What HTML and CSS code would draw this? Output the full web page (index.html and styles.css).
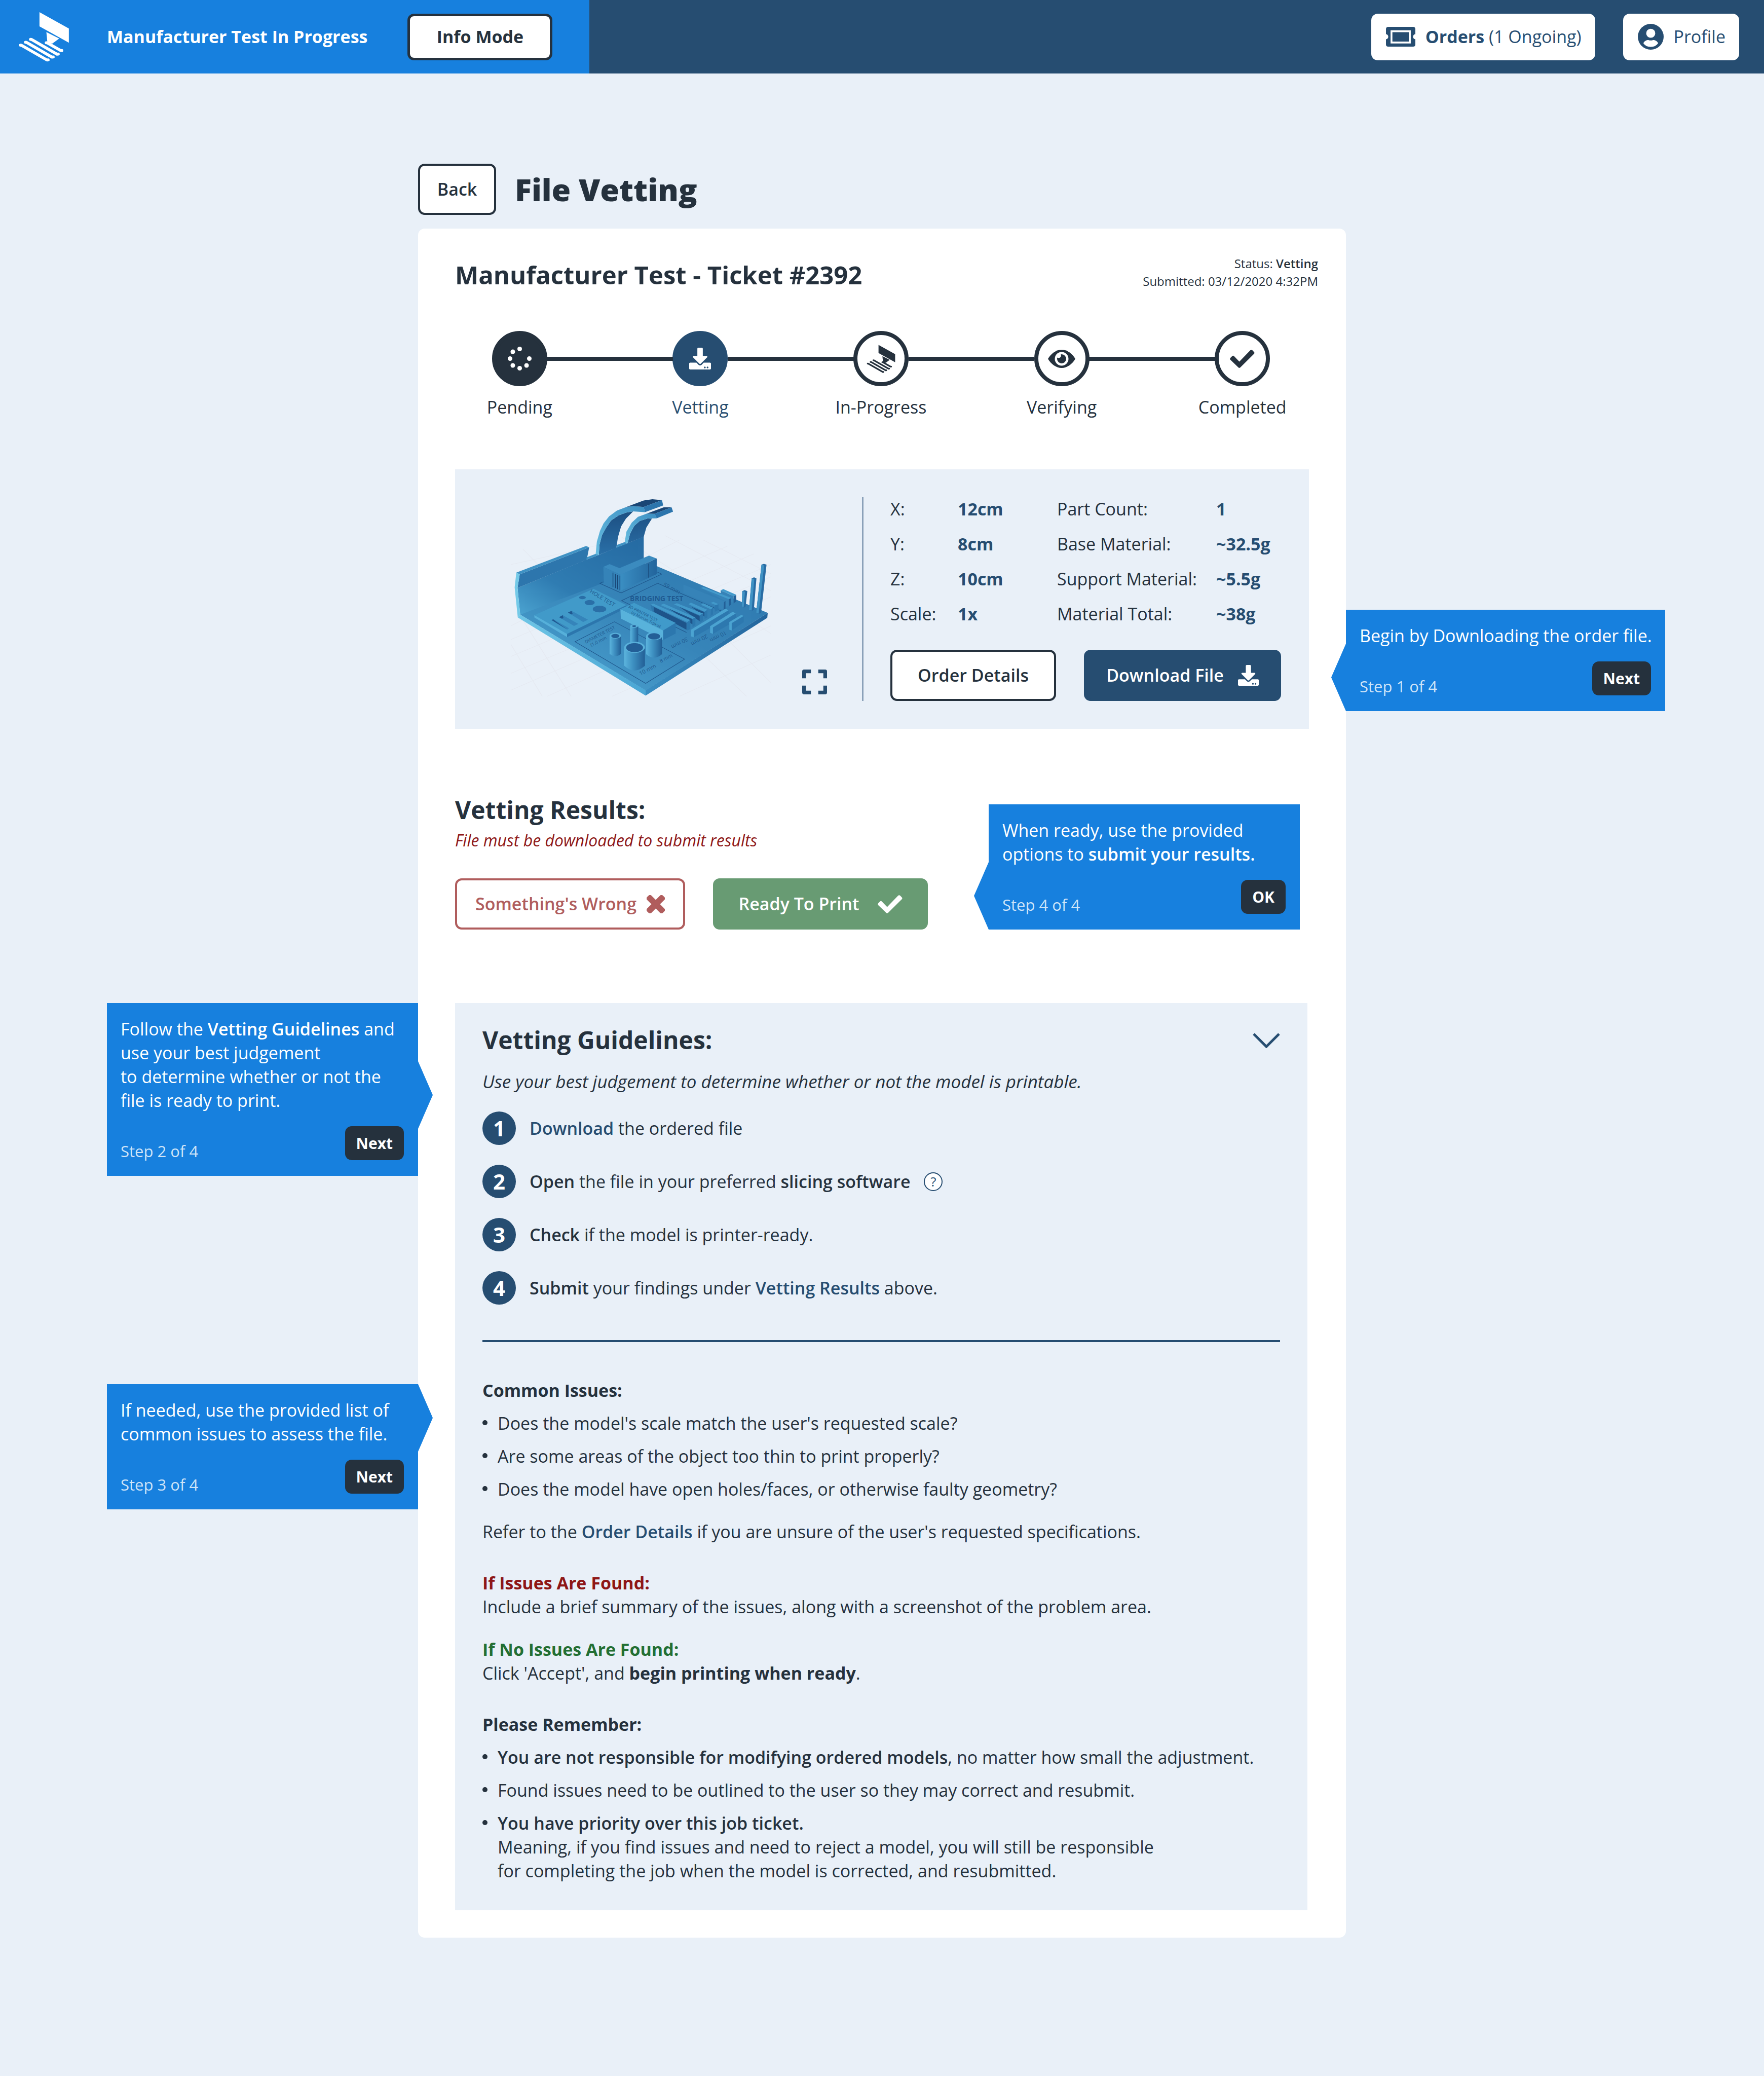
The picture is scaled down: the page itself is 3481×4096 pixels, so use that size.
FILE: index.html
```
<!DOCTYPE html>
<html lang="en">
<head>
<meta charset="utf-8">
<meta name="viewport" content="width=device-width, initial-scale=1">
<title>File Vetting</title>
<link rel="stylesheet" href="styles.css">
</head>
<body>
<svg class="sprite" aria-hidden="true">
  <symbol id="logo" viewBox="60 68 333 328">
    <path d="M198 71 390 178V271L198 164ZM243 201 327 244 282 277 250 272Z"/>
    <path d="M73 287 81 288 247 384 255 383M106 268 114 269 280 365 288 364M139 249 147 250 313 346 321 345M242 271 247 271 337 322 344 322" fill="none" stroke="currentColor" stroke-width="19" stroke-linecap="round" stroke-linejoin="round"/>
  </symbol>
  <symbol id="download" viewBox="0 0 512 512">
    <path d="M216 0h80c13.3 0 24 10.7 24 24v168h87.7c17.8 0 26.7 21.5 14.1 34.1L269.7 378.3c-7.500 7.500-19.800 7.500-27.300 0L90.100 226.100c-12.600-12.600-3.700-34.100 14.100-34.100H192V24c0-13.300 10.700-24 24-24zm296 376v112c0 13.300-10.700 24-24 24H24c-13.300 0-24-10.700-24-24V376c0-13.300 10.700-24 24-24h146.700l49 49c20.100 20.100 52.500 20.100 72.600 0l49-49H488c13.300 0 24 10.700 24 24zm-124 88c0-11-9-20-20-20s-20 9-20 20 9 20 20 20 20-9 20-20zm64 0c0-11-9-20-20-20s-20 9-20 20 9 20 20 20 20-9 20-20z"/>
  </symbol>
  <symbol id="check" viewBox="829 180 161 120">
    <path d="M838 240 849 229 890 271 969 190 980 201 890 290Z" stroke="currentColor" stroke-width="18" stroke-linejoin="round"/>
  </symbol>
</svg>

<header class="topbar">
  <div class="mode">
    <a class="brand" href="#" aria-label="Home"><svg class="brand-logo"><use href="#logo"/></svg></a>
    <span class="mode-title">Manufacturer Test In Progress</span>
    <button class="btn btn-mode" type="button">Info Mode</button>
  </div>
  <nav class="account">
    <a class="pill" href="#">
      <svg class="icon-ticket" viewBox="0 0 64 43"><path d="M5 0H59Q64 0 64 5V16A5 5.500 0 0 0 64 27V38Q64 43 59 43H5Q0 43 0 38V27A5 5.500 0 0 0 0 16V5Q0 0 5 0Z"/><path d="M12 9.500H52V34H12Z" fill="none" stroke="#fff" stroke-width="4"/></svg>
      <span><b>Orders</b> (1 Ongoing)</span>
    </a>
    <a class="pill" href="#">
      <svg class="icon-user" viewBox="0 0 56 56"><circle cx="28" cy="28" r="28"/><circle cx="28" cy="20.500" r="9.800" fill="#fff"/><path d="M12 42C14 37 19 35 23 35Q28 37 33 35C37 35 42 37 44 42Q39 50 28 50T12 42Z" fill="#fff"/></svg>
      <span>Profile</span>
    </a>
  </nav>
</header>

<main class="page">
  <div class="page-head">
    <a class="btn btn-back" href="#">Back</a>
    <h1>File Vetting</h1>
  </div>

  <article class="card">
    <header class="card-head">
      <h2>Manufacturer Test - Ticket #2392</h2>
      <p class="status">Status: <b>Vetting</b><br>Submitted: 03/12/2020 4:32PM</p>
    </header>

    <ol class="steps">
      <li class="step done">
        <span class="dot"><svg class="icon-spinner" viewBox="-26 -26 52 52"><circle cy="-21" r="5"/><circle cx="21" r="5"/><circle cx="15" cy="15" r="5"/><circle cy="21" r="5"/><circle cx="-15" cy="15" r="5"/><circle cx="-21" r="5"/><circle cx="-15" cy="-15" r="5"/></svg></span>
        <span>Pending</span>
      </li>
      <li class="step current" aria-current="step">
        <span class="dot"><svg class="icon-download"><use href="#download"/></svg></span>
        <span>Vetting</span>
      </li>
      <li class="step">
        <span class="dot"><svg class="icon-print"><use href="#logo"/></svg></span>
        <span>In-Progress</span>
      </li>
      <li class="step">
        <span class="dot"><svg class="icon-eye" viewBox="1320 180 180 120"><path d="M1320 240C1340 205 1375 180 1410 180S1480 205 1500 240C1480 275 1445 300 1410 300S1340 275 1320 240Z"/><circle cx="1410" cy="240" r="45" fill="#fff"/><circle cx="1410" cy="240" r="30"/><circle cx="1390" cy="219" r="16" fill="#fff"/></svg></span>
        <span>Verifying</span>
      </li>
      <li class="step">
        <span class="dot"><svg class="icon-check"><use href="#check"/></svg></span>
        <span>Completed</span>
      </li>
    </ol>

    <section class="panel" aria-label="Model">
      <div class="preview">
        <svg class="model" viewBox="0 0 517 396" role="img" aria-label="Printer test model">
          <defs>
            <linearGradient id="wall" x1="0" y1="1" x2="1" y2="0"><stop offset="0" stop-color="#4ba3d0"/><stop offset=".35" stop-color="#2f7cb2"/><stop offset="1" stop-color="#256aa2"/></linearGradient>
            <linearGradient id="floor" x1="0" y1="1" x2="1" y2="0"><stop offset="0" stop-color="#4ea7d4"/><stop offset=".5" stop-color="#3785b9"/><stop offset="1" stop-color="#2c76ad"/></linearGradient>
            <linearGradient id="arch" x1="0" y1="1" x2="1" y2="0"><stop offset="0" stop-color="#65bce0"/><stop offset="1" stop-color="#3d8fc2"/></linearGradient>
            <linearGradient id="under" x1="0" y1="0" x2="0" y2="1"><stop offset="0" stop-color="#1d4f82"/><stop offset="1" stop-color="#2a70a8"/></linearGradient>
            <linearGradient id="tube"><stop offset="0" stop-color="#5cb4dd"/><stop offset=".4" stop-color="#3f92c3"/><stop offset="1" stop-color="#225f96"/></linearGradient>
            <linearGradient id="side"><stop offset="0" stop-color="#6fc6e6"/><stop offset="1" stop-color="#4ba6d4"/></linearGradient>
            <linearGradient id="side2"><stop offset="0" stop-color="#3a8ec2"/><stop offset="1" stop-color="#23659d"/></linearGradient>
          </defs>
          <svg width="517" height="396" viewBox="99 120 1090 1310" preserveAspectRatio="none">
            <g fill="none" stroke="#e5e9f1" stroke-width="3">
              <path d="M99 560 560 400M99 960 800 400M99 1050 1000 440M99 1160 1110 490M99 1270 1181 560M99 1380 1181 640M250 1420 1181 770M520 1420 1181 960M800 1420 1181 1150M150 460 250 620M140 900 350 1420M560 380 1181 1010M740 370 1181 730M900 400 1181 620M99 1080 230 1420M900 1150 1080 1420M1000 1050 1181 1330"/>
            </g>
            <path fill="url(#floor)" d="M138 887 500 500 706 570 1168 875 660 1382Z"/>
            <path fill="url(#side)" d="M128 905 138 887 660 1380V1415Z"/>
            <path fill="url(#side2)" d="M660 1380 1168 875 1166 907 660 1415Z"/>
            <path fill="url(#wall)" d="M138 887 127 712 413 528 465 497 538 448 585 420 652 376V530L484 680Z"/>
            <path fill="#2d76ad" d="M136 624 425 447 415 528 127 712Z"/>
            <path fill="#3f92c4" d="M122 612 412 438 425 447 136 624ZM415 512 455 488 465 497 413 528ZM540 432 573 413 585 420 538 450Z"/>
            <path fill="#74cae8" d="M122 612 136 624 127 712 138 887 128 905 115 708Z"/>
            <path fill="url(#under)" d="M608 213 580 220 548 238 516 272 495 320 478 370 468 430 465 497 538 450 545 380 558 310 578 260ZM668 259 636 275 613 306 595 358 585 420 652 378 663 318 686 260Z"/>
            <path fill="url(#arch)" d="M452 492 457 410 470 340 485 290 508 245 540 208 580 184 608 178 652 184 657 218 608 213 580 220 548 238 516 272 495 320 478 370 468 430 465 497Z"/>
            <path fill="url(#arch)" d="M573 413 580 345 602 286 628 248 665 227 697 228 706 258 668 259 636 275 613 306 595 358 585 420Z"/>
            <path fill="#1a4675" d="M580 184 650 142 688 133 728 139 652 184 608 178ZM665 227 735 186H768L697 228Z"/>
            <path fill="#2c75ad" d="M652 184 728 139 733 174 657 218ZM697 228 768 186 774 214 706 258Z"/>
            <g fill="none" stroke="#1d5389" stroke-width="3">
              <path d="M484 672 469 682 558 745 727 622 706 607M830 1003 560 795 710 682 985 870M366 1063 530 933 822 1177 660 1335Z"/>
            </g>
            <path fill="#3b8bbf" d="M484 575 510 557 551 583 674 501 706 520 555 626Z"/>
            <path fill="#3583b8" d="M484 575 555 626V731L486 680Z"/>
            <path fill="url(#side2)" d="M555 626 706 520V622L555 731Z"/>
            <path fill="none" stroke="#174474" stroke-width="3" d="M524 612V706M534 620V714M543 626V721M553 632V728M673 553V645"/>
            <path fill="#419ac9" d="M197 890 443 718 580 825 333 1012Z"/>
            <path fill="#2c76ad" d="M333 1012 580 825V843L333 1033Z"/>
            <path fill="#56b0da" d="M197 890 333 1012V1033L197 905Z"/>
            <g fill="#2a6fa7"><ellipse cx="397" cy="775" rx="14" ry="11"/><ellipse cx="427" cy="808" rx="21" ry="17"/><ellipse cx="468" cy="850" rx="28" ry="22"/></g>
            <path fill="#3584ba" d="M337 873 352 862 420 920 400 935ZM300 903 315 890 380 947 362 960ZM268 921 276 917 341 975 334 984Z"/>
            <path fill="#1f5890" d="M337 873 352 862 356 880 350 885ZM300 903 315 890 318 908 312 913ZM268 921 276 917 284 928 334 984Z"/>
            <path fill="#3683b8" d="M817 690 992 802 986 858 817 745ZM890 712 1015 782V825L992 838V800ZM972 728 1026 765V812L1010 800 972 750Z"/>
            <path fill="#235f97" d="M986 805 992 797V855L984 860ZM1006 786 1015 780V822L1006 830ZM1026 765 1037 758V800L1026 812Z"/>
            <path fill="#439acb" d="M890 712 900 706 1015 777 1006 786ZM972 728 983 720 1037 757 1026 765Z"/>
            <path fill="#1e548a" d="M693 835 830 940V985L693 868ZM745 835 855 915V950ZM800 835 885 895V930ZM850 835 905 870V900Z"/>
            <path fill="#4299ca" d="M930 810 942 803 963 818 955 826ZM890 822 900 812 940 840 932 852ZM838 818 848 808 917 855 905 868ZM778 820 790 812 900 880 885 890ZM722 824 735 815 867 905 855 915ZM680 822 692 815 846 922 833 935Z"/>
            <path fill="#2c77ae" d="M680 822 693 832V868L686 862ZM833 935 846 922V980L833 990ZM855 915 867 905V955L855 968ZM885 890 900 880V925L885 940ZM905 868 917 855V905L905 915ZM932 852 940 840V885L930 895ZM948 826 963 818V855L948 868Z"/>
            <path fill="#409aca" d="M555 850 612 810 785 940 733 990Z"/>
            <path fill="#58b2db" d="M555 850 733 990V1052L557 912Z"/>
            <path fill="#2c77ae" d="M733 990 785 940V1010L733 1052Z"/>
            <path fill="#2d78af" d="M848 985 992 848 1005 858V905L860 1035 848 1028ZM928 962 1022 868 1035 878V925L940 1012 928 1005ZM1008 935 1058 888 1068 895V935L1018 990 1008 985Z"/>
            <path fill="#4ba3d1" d="M848 985 992 848 1005 858 860 993V1035L848 1028ZM928 962 1022 868 1035 878 940 970V1012L928 1005ZM1008 935 1058 888 1068 895 1018 942V990L1008 985Z"/>
            <path fill="#286ca4" d="M1062 733 1072 726 1083 733 1076 833 1070 840 1060 833ZM1101 650 1111 643 1121 650 1110 855 1102 862 1090 855ZM1142 560 1152 555 1163 560 1140 876 1130 882 1120 873Z"/>
            <path fill="#3f92c4" d="M1062 733 1073 737 1068 838 1060 833ZM1101 650 1112 655 1101 860 1090 855ZM1142 560 1153 566 1130 880 1120 873Z"/>
            <path fill="url(#tube)" d="M596 961V1070Q612 1085 629 1070V961Z"/>
            <path fill="url(#tube)" d="M510 1024V1142Q534 1172 558 1142V1024Z"/>
            <path fill="url(#tube)" d="M662 1027V1145Q695 1190 728 1145V1027Z"/>
            <path fill="url(#tube)" d="M571 1100V1220Q614 1282 657 1220V1100Z"/>
            <g fill="#59b0da"><ellipse cx="612" cy="961" rx="16" ry="11"/><ellipse cx="534" cy="1024" rx="24" ry="19"/><ellipse cx="695" cy="1027" rx="33" ry="26"/><ellipse cx="614" cy="1100" rx="43" ry="36"/></g>
            <g fill="#235f97"><ellipse cx="612" cy="961" rx="8" ry="6"/><ellipse cx="534" cy="1026" rx="17" ry="14"/><ellipse cx="695" cy="1028" rx="25" ry="21"/><ellipse cx="614" cy="1102" rx="35" ry="30"/></g>
          </svg>
          <g class="engraving">
            <text font-size="11" transform="translate(155 188) rotate(31)">HOLE TEST</text>
            <text font-size="14" font-weight="700" x="235" y="205">BRIDGING TEST</text>
            <text font-size="8" transform="translate(231 217) rotate(27)">3D PRINTER TEST</text>
            <text font-size="8" transform="translate(237 229) rotate(27)">by Marian Trpkoš</text>
            <text font-size="9" transform="translate(148 289) rotate(-27)">DIAMETER TEST</text>
            <text font-size="9" transform="translate(159 295) rotate(-27)">(1.0 mm</text>
            <text font-size="11" transform="translate(256 352) rotate(-28)">10 mm</text>
            <text font-size="10" transform="translate(296 327) rotate(-28)">8 mm</text>
            <text font-size="11" transform="translate(347 276) rotate(152)">30 mm</text>
            <text font-size="11" transform="translate(386 270) rotate(152)">20 mm</text>
            <text font-size="11" transform="translate(423 263) rotate(152)">10 mm</text>
            <text font-size="11" transform="translate(300 175) rotate(27)">59 mm</text>
          </g>
        </svg>
        <button class="expand" type="button" aria-label="View full screen"><svg viewBox="0 0 54 54"><path d="M4 19V4H19M35 4H50V19M50 35V50H35M19 50H4V35" fill="none" stroke="currentColor" stroke-width="8" stroke-linejoin="round"/></svg></button>
      </div>
      <div class="details">
        <dl class="specs">
          <dt>X:</dt><dd>12cm</dd><dt>Part Count:</dt><dd>1</dd>
          <dt>Y:</dt><dd>8cm</dd><dt>Base Material:</dt><dd>~32.5g</dd>
          <dt>Z:</dt><dd>10cm</dd><dt>Support Material:</dt><dd>~5.5g</dd>
          <dt>Scale:</dt><dd>1x</dd><dt>Material Total:</dt><dd>~38g</dd>
        </dl>
        <div class="actions">
          <button class="btn btn-details" type="button">Order Details</button>
          <button class="btn btn-download" type="button">Download File <svg class="icon-download-sm"><use href="#download"/></svg></button>
        </div>
      </div>
      <aside class="tip tip-1">
        <p>Begin by Downloading the order file.</p>
        <div class="tip-foot"><span>Step 1 of 4</span><button type="button">Next</button></div>
      </aside>
    </section>

    <section class="results">
      <h2>Vetting Results:</h2>
      <p class="warning">File must be downloaded to submit results</p>
      <div class="actions">
        <button class="btn btn-wrong" type="button">Something's Wrong <svg class="icon-x" viewBox="0 0 36 36"><g transform="rotate(45 18 18)"><rect x="-4" y="12" width="44" height="12" rx="4"/><rect x="12" y="-4" width="12" height="44" rx="4"/></g></svg></button>
        <button class="btn btn-ready" type="button">Ready To Print <svg class="icon-check"><use href="#check"/></svg></button>
      </div>
      <aside class="tip tip-4">
        <p>When ready, use the provided<br>options to <b>submit your results.</b></p>
        <div class="tip-foot"><span>Step 4 of 4</span><button type="button">OK</button></div>
      </aside>
    </section>

    <section class="guidelines">
      <div class="guidelines-head">
        <h2>Vetting Guidelines:</h2>
        <button class="toggle" type="button" aria-label="Collapse guidelines"><svg viewBox="0 0 54 31"><path d="M2 3 27 28 52 3" fill="none" stroke="currentColor" stroke-width="5"/></svg></button>
      </div>
      <p class="lead">Use your best judgement to determine whether or not the model is printable.</p>
      <ol class="tasks">
        <li><span class="num">1</span><span><a href="#">Download</a> the ordered file</span></li>
        <li><span class="num">2</span><span><b>Open</b> the file in your preferred <b>slicing software</b></span><button class="help" type="button" aria-label="About slicing software">?</button></li>
        <li><span class="num">3</span><span><b>Check</b> if the model is printer-ready.</span></li>
        <li><span class="num">4</span><span><b>Submit</b> your findings under <a href="#">Vetting Results</a> above.</span></li>
      </ol>
      <hr>
      <div class="block issues">
        <h3>Common Issues:</h3>
        <ul>
          <li>Does the model's scale match the user's requested scale?</li>
          <li>Are some areas of the object too thin to print properly?</li>
          <li>Does the model have open holes/faces, or otherwise faulty geometry?</li>
        </ul>
        <p class="refer">Refer to the <a href="#">Order Details</a> if you are unsure of the user's requested specifications.</p>
        <aside class="tip tip-3">
          <p>If needed, use the provided list of<br>common issues to assess the file.</p>
          <div class="tip-foot"><span>Step 3 of 4</span><button type="button">Next</button></div>
        </aside>
      </div>
      <div class="block">
        <h3 class="bad">If Issues Are Found:</h3>
        <p>Include a brief summary of the issues, along with a screenshot of the problem area.</p>
        <h3 class="good">If No Issues Are Found:</h3>
        <p>Click 'Accept', and <b class="strong">begin printing when ready</b>.</p>
      </div>
      <div class="block">
        <h3>Please Remember:</h3>
        <ul>
          <li><b>You are not responsible for modifying ordered models</b>, no matter how small the adjustment.</li>
          <li>Found issues need to be outlined to the user so they may correct and resubmit.</li>
          <li><b>You have priority over this job ticket.</b><br>Meaning, if you find issues and need to reject a model, you will still be responsible<br>for completing the job when the model is corrected, and resubmitted.</li>
        </ul>
      </div>
      <aside class="tip tip-2">
        <p>Follow the <b>Vetting Guidelines</b> and<br>use your best judgement<br>to determine whether or not the<br>file is ready to print.</p>
        <div class="tip-foot"><span>Step 2 of 4</span><button type="button">Next</button></div>
      </aside>
    </section>
  </article>
</main>
</body>
</html>
```
FILE: styles.css
```
:root {
  --ink: #25313d;
  --navy: #264d71;
  --blue: #1780de;
  --pale: #e9f0f8;
}

* { box-sizing: border-box; }

body {
  margin: 0;
  min-height: 100vh;
  background: var(--pale);
  color: var(--ink);
  font: 400 34px/47px "Open Sans", "Noto Sans", sans-serif;
}

h1, h2, h3, p, ul, ol, dl, dd { margin: 0; padding: 0; }
ul, ol { list-style: none; }
h1 { font-size: 61px; line-height: 80px; font-weight: 800; }
h2 { font-size: 48px; line-height: 60px; font-weight: 700; }
h3 { font-size: 34px; line-height: 47px; font-weight: 700; }
b { font-weight: 600; }
a { color: var(--navy); font-weight: 600; text-decoration: none; }
svg { display: block; flex: none; fill: currentColor; }
button { font: inherit; color: inherit; cursor: pointer; }

.sprite { position: absolute; width: 0; height: 0; }
.strong { font-weight: 700; }

/* Buttons */
.btn {
  display: inline-flex;
  align-items: center;
  justify-content: center;
  height: 101px;
  padding: 0;
  border: 4px solid var(--ink);
  border-radius: 13px;
  background: #fff;
  color: var(--ink);
  font-weight: 600;
  white-space: nowrap;
}
.btn-mode { width: 286px; height: 92px; border-width: 5px; margin-left: 79px; font-weight: 700; }
.btn-back { width: 154px; }
.btn-details { width: 327px; }
.btn-download { width: 389px; gap: 28px; border-color: var(--navy); background: var(--navy); color: #fff; }
.btn-wrong { width: 454px; gap: 20px; border-color: #b05d5d; color: #b05d5d; }
.btn-ready { width: 424px; gap: 36px; border-color: #689b73; background: #689b73; color: #fff; }

/* Top bar */
.topbar {
  display: flex;
  justify-content: space-between;
  height: 145px;
  background: var(--navy);
}
.mode {
  display: flex;
  align-items: center;
  padding: 0 73px 0 36px;
  background: var(--blue);
  color: #fff;
}
.brand { color: #fff; margin-right: 74px; }
.brand-logo { width: 101px; height: 99px; }
.mode-title { font-weight: 700; white-space: nowrap; }
.account { display: flex; align-items: center; gap: 55px; padding-right: 49px; }
.pill {
  display: flex;
  align-items: center;
  gap: 20px;
  height: 92px;
  padding: 0 27px 0 29px;
  border-radius: 13px;
  background: #fff;
  font-weight: 400;
  white-space: nowrap;
}
.pill b { font-weight: 700; }
.icon-ticket { width: 58px; height: 39px; }
.icon-user { width: 51px; height: 51px; }

/* Page */
.page { max-width: 1831px; margin: 0 auto; padding: 178px 0 271px; }
.page-head { display: flex; align-items: center; gap: 37px; margin-bottom: 27px; }
.card { padding: 51px 0 54px; border-radius: 13px; background: #fff; }
.card-head {
  display: flex;
  align-items: flex-end;
  justify-content: space-between;
  padding: 0 55px 0 73px;
}
.card-head h2 { font-size: 49px; }
.status { font-size: 24px; line-height: 35px; text-align: right; }

/* Progress steps */
.steps { display: grid; grid-template-columns: repeat(5, 1fr); padding: 81px 26px 99px 22px; }
.step {
  position: relative;
  display: flex;
  flex-direction: column;
  align-items: center;
  gap: 18px;
}
.step + .step::before {
  content: "";
  position: absolute;
  top: 51px;
  right: calc(50% + 54px);
  width: calc(100% - 108px);
  height: 8px;
  background: var(--ink);
}
.dot {
  display: flex;
  align-items: center;
  justify-content: center;
  width: 109px;
  height: 109px;
  border: 8px solid var(--ink);
  border-radius: 50%;
}
.done .dot { background: var(--ink); color: #fff; }
.current { color: var(--navy); }
.current .dot { border-color: var(--navy); background: var(--navy); color: #fff; }
.icon-spinner { width: 47px; height: 47px; }
.icon-download { width: 43px; height: 43px; }
.icon-print { width: 57px; height: 56px; }
.icon-eye { width: 54px; height: 36px; }
.icon-check { width: 49px; height: 36px; }

/* Model panel */
.panel {
  position: relative;
  display: flex;
  margin: 0 73px;
  padding: 55px 0;
  background: var(--pale);
}
.preview { display: flex; flex: 1; padding-left: 110px; }
.model { width: 517px; height: 396px; }
.engraving { fill: #1f5a91; font-family: "Open Sans", sans-serif; }
.expand {
  align-self: flex-end;
  margin: 0 0 13px 58px;
  padding: 0;
  border: 0;
  background: none;
  color: var(--navy);
}
.expand svg { width: 49px; height: 49px; }
.details { border-left: 3px solid #8ba1b9; padding: 0 55px 0 53px; }
.specs {
  display: grid;
  grid-template-columns: 133px 196px 314px auto;
  gap: 23px 0;
  margin-bottom: 48px;
  line-height: 46px;
  white-space: nowrap;
}
.specs dd { color: var(--navy); font-weight: 700; }
.actions { display: flex; gap: 55px; }
.icon-download-sm { width: 41px; height: 41px; }

/* Results */
.results { position: relative; margin: 130px 73px 145px; }
.warning {
  margin: 10px 0 55px;
  color: #8e1616;
  font-size: 32px;
  line-height: 40px;
  font-style: italic;
}
.icon-x { width: 36px; height: 36px; }

/* Guidelines */
.guidelines { position: relative; margin: 0 76px 0 73px; padding: 43px 54px 54px; background: var(--pale); }
.guidelines-head { display: flex; align-items: center; justify-content: space-between; }
.toggle { padding: 0; border: 0; background: none; color: var(--navy); }
.toggle svg { width: 54px; height: 31px; }
.lead { margin: 28px 0 36px; font-size: 35px; font-style: italic; }
.tasks { display: grid; gap: 39px; }
.tasks li { display: flex; align-items: center; gap: 27px; }
.num {
  flex: none;
  width: 66px;
  height: 66px;
  border-radius: 50%;
  background: var(--navy);
  color: #fff;
  font-size: 42px;
  line-height: 66px;
  font-weight: 700;
  text-align: center;
}
.help {
  width: 37px;
  height: 37px;
  padding: 0;
  border: 2px solid var(--navy);
  border-radius: 50%;
  background: #fff;
  color: var(--navy);
  font-size: 26px;
  line-height: 33px;
}
.guidelines hr { height: 4px; margin: 70px 0 72px; border: 0; background: var(--navy); }
.block { position: relative; }
.block + .block { margin-top: 54px; }
.block ul { display: grid; gap: 18px; margin-top: 18px; }
.block li { padding-left: 30px; }
.block li::before {
  content: "";
  display: inline-block;
  width: 10px;
  height: 10px;
  margin: 0 20px 0 -30px;
  border-radius: 50%;
  background: var(--ink);
  vertical-align: 9px;
}
.refer, .good { margin-top: 37px; }
.bad { color: #8e1616; }
.good { color: #236f33; }

/* Walkthrough tips */
.tip {
  position: absolute;
  width: 614px;
  padding: 28px 28px 31px 27px;
  background: var(--blue);
  color: #fff;
  white-space: nowrap;
}
.tip::after {
  content: "";
  position: absolute;
  width: 29px;
  height: 133px;
  background: var(--blue);
}
.tip-foot {
  display: flex;
  align-items: flex-end;
  justify-content: space-between;
  margin-top: 27px;
  font-size: 31px;
  line-height: 36px;
}
.tip-foot span { color: #cfe4f8; }
.tip-foot button {
  height: 67px;
  padding: 0 22px;
  border: 0;
  border-radius: 13px;
  background: var(--ink);
  font-size: 30px;
  font-weight: 700;
}
.tip-1::after, .tip-4::after { right: 100%; bottom: 0; clip-path: polygon(100% 0, 100% 100%, 0 50%); }
.tip-2::after, .tip-3::after { left: 100%; clip-path: polygon(0 0, 100% 50%, 0 100%); }
.tip-1 { width: 630px; left: calc(100% + 73px); bottom: 35px; }
.tip-4 { right: 18px; bottom: 0; }
.tip-2 { right: calc(100% + 73px); top: 0; }
.tip-2::after { top: 115px; }
.tip-3 { right: calc(100% + 127px); top: 11px; }
.tip-3::after { top: 0; }
```
